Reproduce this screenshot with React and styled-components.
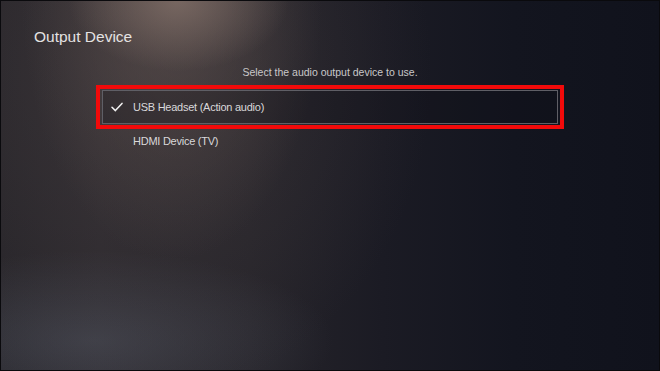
import React from 'react';
import styled, { createGlobalStyle } from 'styled-components';

const GlobalStyle = createGlobalStyle`
  html, body {
    margin: 0;
    padding: 0;
    background: #11131d;
  }
`;

const Screen = styled.div`
  width: 660px;
  height: 371px;
  box-sizing: border-box;
  border: 1px solid #0a0a0d;
  display: flex;
  flex-direction: column;
  overflow: hidden;
  font-family: 'Liberation Sans', Arial, sans-serif;
  background:
    radial-gradient(ellipse 110px 70px at 27% 0%, rgba(135, 116, 108, 0.7), rgba(135, 116, 108, 0) 100%),
    radial-gradient(ellipse 150px 260px at 26% 0%, rgba(100, 86, 82, 0.6), rgba(100, 86, 82, 0) 100%),
    radial-gradient(ellipse 300px 330px at 20% 20%, rgba(70, 62, 64, 0.5), rgba(70, 62, 64, 0) 100%),
    radial-gradient(ellipse 240px 90px at 14% 92%, rgba(80, 84, 96, 0.55), rgba(80, 84, 96, 0) 100%),
    linear-gradient(90deg, #262429 0%, #2c292e 15%, #26242a 38%, #1b1b24 58%, #13151f 78%, #10121c 100%);
`;

const Title = styled.h1`
  margin: 26px 0 0 33px;
  font-size: 15.5px;
  line-height: 20px;
  font-weight: 400;
  color: #e4e2e2;
`;

const Subtitle = styled.p`
  margin: 18px 0 0;
  text-align: center;
  font-size: 10.5px;
  line-height: 14px;
  color: #c9c8ca;
`;

const List = styled.div`
  width: 456px;
  margin: 11px auto 0;
  display: flex;
  flex-direction: column;
`;

const Row = styled.div`
  position: relative;
  height: 34px;
  box-sizing: border-box;
  display: flex;
  align-items: center;
  gap: 10px;
  padding-left: 8px;
  border: 1px solid ${p => (p.$selected ? '#5f5f66' : 'transparent')};
  background: ${p => (p.$selected ? 'rgba(10, 11, 18, 0.25)' : 'transparent')};
  font-size: 11px;
  color: #d9d8da;
`;

const CheckSlot = styled.span`
  width: 12px;
  height: 10px;
  display: flex;
  align-items: center;
  justify-content: center;
`;

const Label = styled.span`
  letter-spacing: -0.25px;
`;

const Annotation = styled.div`
  position: absolute;
  top: -6px;
  bottom: -6px;
  left: -7px;
  right: -7px;
  border: 4px solid #f20a0a;
  pointer-events: none;
`;

const Check = () => (
  <svg width="12" height="10" viewBox="0 0 12 10" fill="none">
    <path d="M1 5.2 L4.4 8.6 L11 1.4" stroke="#f2f2f2" strokeWidth="1.5" strokeLinecap="round" strokeLinejoin="round" />
  </svg>
);

const devices = [
  { name: 'USB Headset (Action audio)', selected: true },
  { name: 'HDMI Device (TV)', selected: false },
];

export default function App() {
  return (
    <>
      <GlobalStyle />
      <Screen>
        <Title>Output Device</Title>
        <Subtitle>Select the audio output device to use.</Subtitle>
        <List>
          {devices.map(d => (
            <Row key={d.name} $selected={d.selected}>
              <CheckSlot>{d.selected && <Check />}</CheckSlot>
              <Label>{d.name}</Label>
              {d.selected && <Annotation />}
            </Row>
          ))}
        </List>
      </Screen>
    </>
  );
}
